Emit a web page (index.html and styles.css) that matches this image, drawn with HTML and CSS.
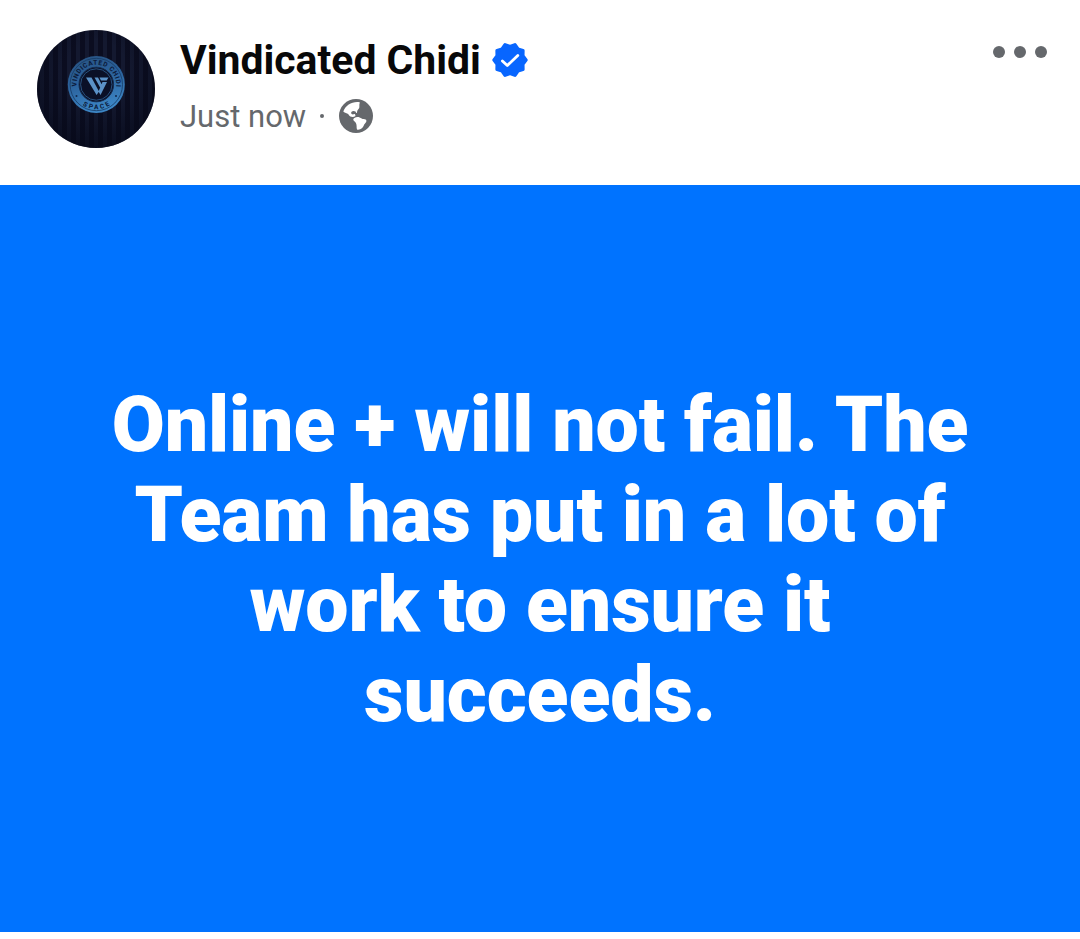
FILE: index.html
```html
<!DOCTYPE html>
<html lang="en">
<head>
  <meta charset="UTF-8">
  <meta name="viewport" content="width=device-width, initial-scale=1.0">
  <title>Vindicated Chidi</title>
  <link rel="stylesheet" href="styles.css">
</head>
<body>

<article class="post">
  <header class="post-header">
    <svg class="avatar" viewBox="0 0 118 118">
      <defs>
        <pattern id="stripes" width="9" height="118" patternUnits="userSpaceOnUse">
          <rect width="9" height="118" fill="#0b0d20"/>
          <rect x="3" width="4" height="118" fill="#141930"/>
        </pattern>
        <radialGradient id="shade" cx="0.5" cy="0.35" r="0.65">
          <stop offset="0.4" stop-color="#060919" stop-opacity="0"/>
          <stop offset="1" stop-color="#060919" stop-opacity="0.7"/>
        </radialGradient>
        <linearGradient id="metal" x1="0" y1="0" x2="0.3" y2="1">
          <stop offset="0" stop-color="#28517f"/>
          <stop offset="0.5" stop-color="#2b629c"/>
          <stop offset="1" stop-color="#3c85c4"/>
        </linearGradient>
        <path id="ring-top" d="M42.2 64.5 A19.8 19.8 0 1 1 76.4 64.5"/>
        <path id="ring-bottom" d="M35 55 A24.3 24.3 0 0 0 83.6 55"/>
      </defs>
      <circle cx="59" cy="59" r="59" fill="url(#stripes)"/>
      <circle cx="59" cy="59" r="59" fill="url(#shade)"/>
      <circle cx="59.3" cy="54.5" r="28.5" fill="url(#metal)"/>
      <circle cx="59.3" cy="54.5" r="26.2" fill="none" stroke="#173a63" stroke-width="0.8"/>
      <circle cx="59.3" cy="54.5" r="17.3" fill="#0a1027" stroke="#142c50" stroke-width="1"/>
      <circle cx="59.3" cy="54.5" r="15.7" fill="none" stroke="#28517f" stroke-width="1"/>
      <g class="ring-text">
        <text><textPath href="#ring-top" startOffset="50%" text-anchor="middle" textLength="66">VINDICATED CHIDI</textPath></text>
        <text><textPath href="#ring-bottom" startOffset="50%" text-anchor="middle" textLength="29">SPACE</textPath></text>
      </g>
      <circle cx="39.5" cy="66" r="1" fill="#10264b"/>
      <circle cx="79" cy="66" r="1" fill="#10264b"/>
      <path d="M49 47.5h5.500l7.500 14-2.400 3.500zM57.500 47.500h3.500l4 7.500-1.600 3zM62.500 47.500h9l-1.800 3h-5.700zM65.500 52h4.500l-6.500 13-2-3.500z" fill="#5b92c8"/>
    </svg>

    <div class="info">
      <div class="name-row">
        <h1 class="name">Vindicated Chidi</h1>
        <svg class="verified" viewBox="-18 -18 36 36">
          <path d="M16 0 12.84 4.17 12.94 9.4 7.94 10.92 4.94 15.22 0 13.5-4.94 15.22-7.94 10.92-12.94 9.4-12.84 4.17-16 0-12.84-4.17-12.94-9.4-7.94-10.92-4.94-15.22 0-13.5 4.94-15.22 7.94-10.92 12.94-9.4 12.84-4.17z" fill="#0866ff" stroke="#0866ff" stroke-width="3.4" stroke-linejoin="round"/>
          <path d="M-7.6 .9-2.7 5.6 7.8-4.6" fill="none" stroke="#fff" stroke-width="2.8" stroke-linecap="round" stroke-linejoin="round"/>
        </svg>
      </div>
      <div class="meta">
        <span class="time">Just now</span>
        <span class="dot"></span>
        <svg class="globe" viewBox="0 0 34 34">
          <circle cx="17" cy="17" r="17" fill="#65686c"/>
          <path d="M20.7 3.2C13.5 2 6.7 6 4.3 12.4c1 1.5 2.8 1.3 4.4 2.3 1 .7 1.2 2 2.600 2.700 1.700.8 3.700.6 5.200-.4-.3-.9-.2-1.600-.8-2-.8-.4-1.500.7-2.500.3-1.300-.5-1.300-1.900-.6-2.600 1-1 2.900-.8 3.900-.1.500.5.300 1.300.9 1.500.6.100.7-1 .8-1.800.3-1.500 1.500-2 2-3.300.5-1.600-.2-3.200.5-5.100z" fill="#fff"/>
          <path d="M15.4 19c1.400-1 3.400-1.200 5.200-.6 1.700.5 2.500 1.500 4.200 1.700 1.200.2 2.500.3 2.600 1.600.1 1.700-1.500 2.500-2.200 3.900-.7 1.500-1.200 3.700-4 4.700-1.400.5-2.400.7-3.200.1-.7-2 0-4.200-1-6.200-.8-1.500-2.700-2.200-2.700-3.600 0-.8.500-1.200 1.100-1.600z" fill="#fff"/>
        </svg>
      </div>
    </div>

    <div class="menu">
      <span></span>
      <span></span>
      <span></span>
    </div>
  </header>

  <div class="post-body">
    <p>Online + will not fail. The Team has put in a lot of work to ensure it succeeds.</p>
  </div>
</article>

</body>
</html>
```
FILE: styles.css
```css
body {
  font-family: Roboto, sans-serif;
  margin: 0;
  background: #fff;
}
.post {
  width: 1080px;
}
.post-header {
  display: flex;
  align-items: flex-start;
  box-sizing: border-box;
  height: 185px;
  padding: 30px 33px 0 37px;
}
.avatar {
  width: 118px;
  height: 118px;
  flex: none;
}
.ring-text {
  font-size: 6.6px;
  font-weight: 800;
  fill: #0c1c3d;
}
.info {
  flex: 1;
  padding: 6px 0 0 25px;
}
.name-row {
  display: flex;
  align-items: center;
  gap: 11px;
  height: 48px;
}
.name {
  margin: 0;
  font-size: 40.9px;
  font-weight: 700;
  line-height: 50px;
  color: #080809;
}
.verified {
  width: 36px;
  height: 36px;
}
.meta {
  display: flex;
  align-items: center;
  height: 36px;
  margin-top: 14px;
  font-size: 31px;
  line-height: 36px;
  color: #65686c;
}
.time {
  padding-top: 2px;
}
.dot {
  width: 4px;
  height: 4px;
  margin: 0 15px 0 14px;
  border-radius: 50%;
  background: #65686c;
}
.globe {
  width: 34px;
  height: 34px;
}
.menu {
  display: flex;
  gap: 9px;
  padding-top: 16px;
}
.menu span {
  width: 12px;
  height: 12px;
  border-radius: 50%;
  background: #65686c;
}
.post-body {
  display: flex;
  align-items: center;
  justify-content: center;
  height: 747px;
  background: #0073ff;
}
.post-body p {
  width: 880px;
  margin: 0;
  padding-top: 2px;
  font-size: 77px;
  font-weight: 900;
  line-height: 90px;
  letter-spacing: -0.13px;
  text-align: center;
  color: #fff;
}
```
